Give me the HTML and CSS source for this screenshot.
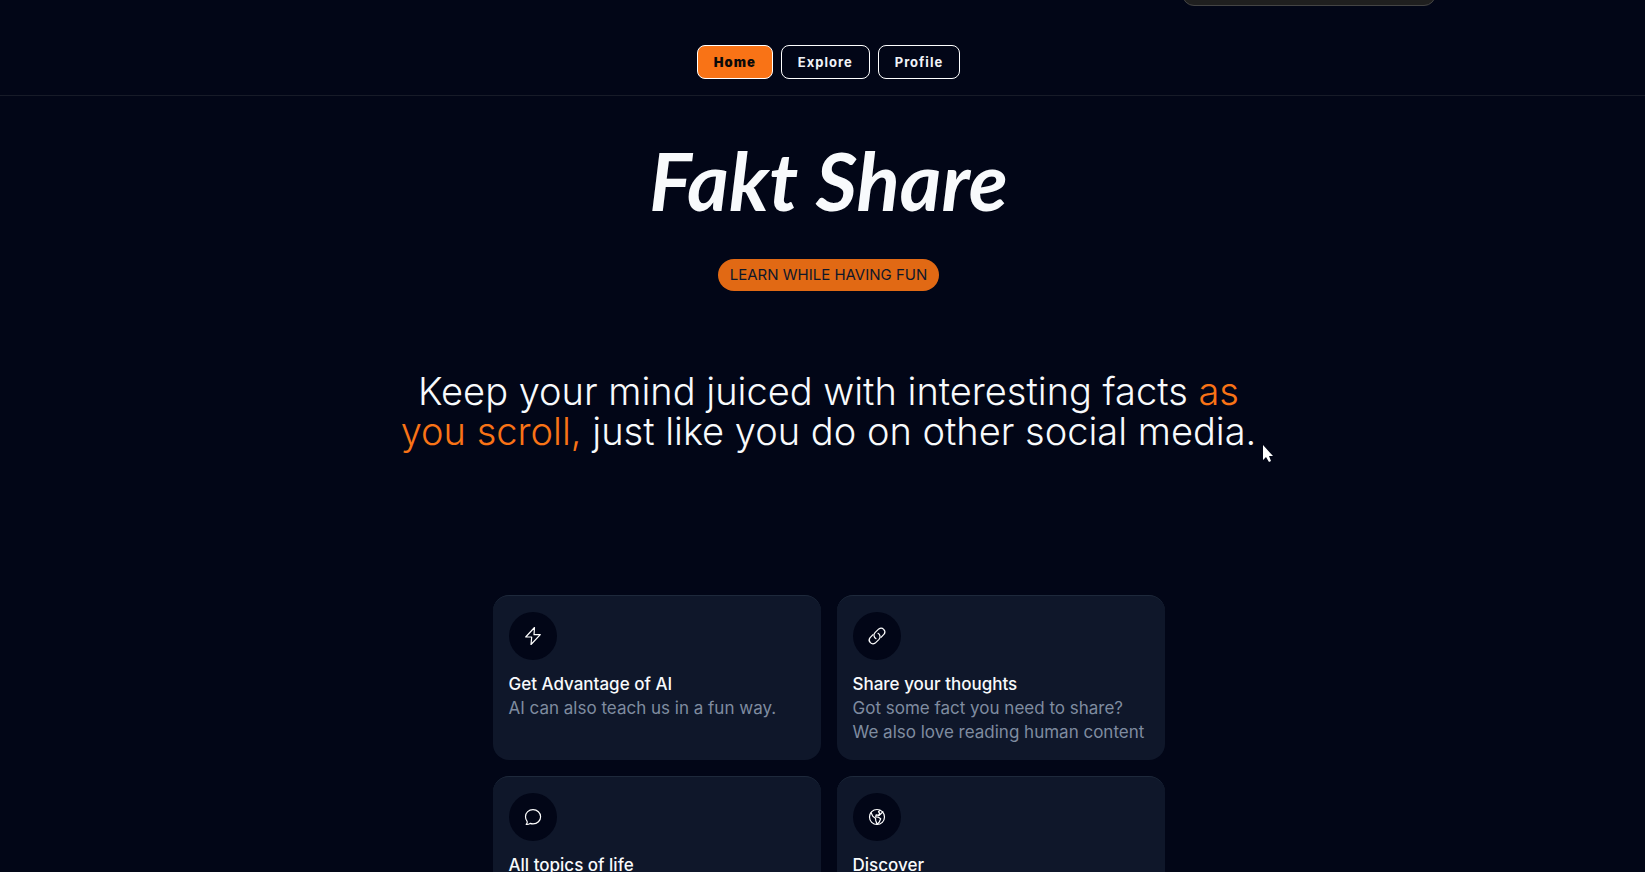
FILE: index.html
```html
<!DOCTYPE html>
<html lang="en">

<head>
    <meta charset="UTF-8">
    <meta name="viewport" content="width=device-width, initial-scale=1.0">
    <title>Fakt Share</title>
    <link rel="stylesheet" href="styles.css">
</head>

<body>
    <div class="toast"></div>
    <header>
        <nav>
            <a href="#" class="active">Home</a>
            <a href="#">Explore</a>
            <a href="#">Profile</a>
        </nav>
    </header>
    <main>
        <h1>Fakt Share</h1>
        <p class="badge">LEARN WHILE HAVING FUN</p>
        <h2>Keep your mind juiced with interesting facts <span>as<br>you scroll,</span> just like you do on other social media.
            <svg class="cursor" width="12" height="19" viewBox="0 0 12 19">
                <path d="M1 1v15l3-3 3 5 2-1-2-5h4z" fill="#fff" />
            </svg>
        </h2>
        <section class="cards">
            <div class="card">
                <div class="icon">
                    <svg width="20" height="20" viewBox="0 0 20 20">
                        <path d="M11.5 1.5L2.7 11H8.7L8 18.5L17.3 8.7H11Z" />
                    </svg>
                </div>
                <h3>Get Advantage of AI</h3>
                <p>AI can also teach us in a fun way.</p>
            </div>
            <div class="card">
                <div class="icon">
                    <svg width="20" height="20" viewBox="0 0 20 20">
                        <path d="M11 7.3a3.8 3.8 0 0 1 1 6L8.200 17.100a3.800 3.800 0 0 1-5.300-5.300L6 8.700" />
                        <path d="M9 12.700a3.800 3.800 0 0 1-1-6L11.800 2.900a3.800 3.800 0 0 1 5.300 5.300L14 11.300" />
                    </svg>
                </div>
                <h3>Share your thoughts</h3>
                <p>Got some fact you need to share?<br>We also love reading human content</p>
            </div>
            <div class="card">
                <div class="icon">
                    <svg width="20" height="20" viewBox="0 0 20 20">
                        <path d="M3.2 17.3c1-.6 1.3-1.8.9-3A7.4 7.4 0 0 1 2.5 9.7C2.5 5.6 5.8 2.7 10 2.7s7.6 3 7.6 7-3.2 7.2-7.6 7.2c-1 0-2-.2-2.9-.5-1.1.7-2.5 1.1-3.900.9z" />
                    </svg>
                </div>
                <h3>All topics of life</h3>
            </div>
            <div class="card">
                <div class="icon">
                    <svg width="20" height="20" viewBox="0 0 20 20">
                        <circle cx="10" cy="10" r="7.5" />
                        <path d="M4 5.5l1.8 3.7 2.7 2.200.3 2.300 1.300 3.600 2.200-2.300 1.400-3.300-2.300-1.500-2.700-.3.400-2.100 2.500.5 1-2.100-1.100-1.400 1.500-1.400M12.300 8.300l3.700-3.500" />
                    </svg>
                </div>
                <h3>Discover</h3>
            </div>
        </section>
    </main>
</body>

</html>
```
FILE: styles.css
```css
* {
    box-sizing: border-box;
    margin: 0;
    padding: 0;
}

body {
    height: 100vh;
    overflow: hidden;
    position: relative;
    background-color: #020617;
    color: #f8fafc;
    font-family: Inter, "Open Sans", sans-serif;
}

.toast {
    position: absolute;
    top: -40px;
    right: 209px;
    width: 254px;
    height: 46px;
    background-color: #1f1f1f;
    border: 1px solid #444;
    border-radius: 12px;
}

header {
    padding: 45px 0 16px 12px;
    border-bottom: 1px solid #171b28;
}

nav {
    display: flex;
    justify-content: center;
    gap: 8px;
}

nav a {
    height: 34px;
    padding: 0 16px;
    border: 1px solid #fff;
    border-radius: 8px;
    color: #f1f3f7;
    font-size: 13px;
    font-weight: 700;
    line-height: 32px;
    letter-spacing: 1px;
    text-decoration: none;
}

nav .active {
    background-color: #f97316;
    color: #0a0a0a;
    font-weight: 900;
}

main {
    display: flex;
    flex-direction: column;
    align-items: center;
    padding-left: 12px;
}

h1 {
    padding-top: 32px;
    font-family: Lato, sans-serif;
    font-size: 80px;
    font-style: italic;
    font-weight: 700;
    line-height: 104px;
}

.badge {
    margin-top: 27px;
    padding: 0 12px;
    border-radius: 16px;
    background-color: #e16914;
    color: #0f172a;
    font-size: 15px;
    line-height: 32px;
}

h2 {
    position: relative;
    margin-top: 80px;
    font-size: 38px;
    font-weight: 300;
    line-height: 40px;
    text-align: center;
}

h2 span {
    color: #f97316;
}

.cursor {
    position: absolute;
    right: -18px;
    bottom: -12px;
}

.cards {
    display: grid;
    grid-template-columns: 1fr 1fr;
    gap: 16px;
    width: 100%;
    max-width: 672px;
    margin-top: 144px;
}

.card {
    min-height: 165px;
    padding: 16px;
    border-top: 1px solid #1e293b;
    border-radius: 16px;
    background-color: #0f172a;
    line-height: 24px;
}

.icon {
    display: flex;
    align-items: center;
    justify-content: center;
    width: 48px;
    height: 48px;
    margin-bottom: 12px;
    border-radius: 50%;
    background-color: #020617;
}

.icon svg {
    fill: none;
    stroke: #fff;
    stroke-width: 1.2;
    stroke-linecap: round;
    stroke-linejoin: round;
}

.card h3 {
    font-size: 17px;
    font-weight: 500;
}

.card p {
    color: #7f8ca0;
    font-size: 17px;
}
```
